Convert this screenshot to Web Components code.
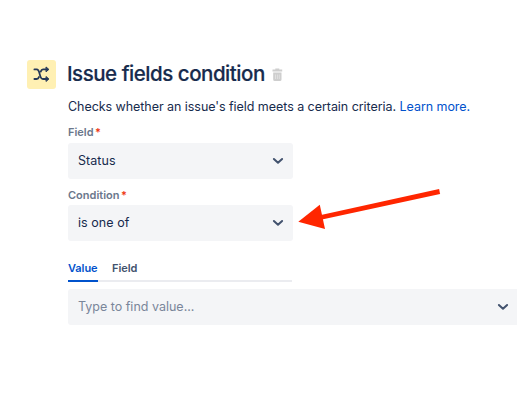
<!DOCTYPE html>
<html lang="en">
<head>
<meta charset="UTF-8">
<title>Issue fields condition</title>
<style>
    body {
        margin: 0;
        background: #fff;
        color: #172b4d;
        font-family: Inter, "Liberation Sans", sans-serif;
        overflow: hidden;
    }
</style>
</head>
<body>
<condition-panel>
    <span slot="title">Issue fields condition</span>
    <span slot="description">Checks whether an issue's field meets a certain criteria.</span>
    <form-field label="Field"><select-box>Status</select-box></form-field>
    <form-field label="Condition" compact><select-box>is one of</select-box></form-field>
    <tab-bar></tab-bar>
    <select-box wide>Type to find value...</select-box>
</condition-panel>
<pointer-arrow></pointer-arrow>

<script>
class ConditionPanel extends HTMLElement {
    constructor() {
        super();
        this.attachShadow({ mode: 'open' });
        this.shadowRoot.innerHTML = `
            <style>
                :host {
                    display: grid;
                    grid-template-columns: 29px 1fr;
                    column-gap: 12px;
                    padding: 60px 0 0 27px;
                    white-space: nowrap;
                }
                .icon {
                    width: 29px;
                    height: 29px;
                    border-radius: 3px;
                    background: #fff0b3;
                }
                svg { display: block; }
                header {
                    display: flex;
                    align-items: center;
                    height: 29px;
                }
                h1 {
                    margin: 0 0 2px -1px;
                    font-size: 20.5px;
                    font-weight: 500;
                    line-height: 27px;
                    letter-spacing: -0.47px;
                    -webkit-text-stroke: 0.2px;
                }
                .trash { margin-left: 7px; }
                .body { grid-column: 2; }
                p {
                    margin: 9px 0 9px;
                    font-size: 12.5px;
                    line-height: 18px;
                    letter-spacing: -0.05px;
                }
                a {
                    color: #0052cc;
                    text-decoration: none;
                }
            </style>
            <div class="icon">
                <svg width="29" height="29" viewBox="0 0 29 29" fill="none" stroke="#253858" stroke-width="1.8" stroke-linecap="round" stroke-linejoin="round">
                    <path d="M7.4 9.4H9.6C13.8 9.4 11.6 19 16 19H20"/>
                    <path d="M7.4 19H9.6C10.9 19 11.6 18.2 12 17M13.7 11.6C14.2 10.2 14.8 9.4 16 9.4H20"/>
                    <path fill="#253858" stroke-width="1" d="M19.3 7.2L21.9 9.4L19.3 11.6ZM19.3 16.8L21.9 19L19.3 21.2Z"/>
                </svg>
            </div>
            <header>
                <h1><slot name="title"></slot></h1>
                <svg class="trash" width="11" height="14" viewBox="0 0 11 14">
                    <path fill="#cecece" d="M3.3 0.6h4v1h2.9v1.9H0.5V1.6h2.8zM1.2 4.4h8.3v7.2q0 1.5-1.5 1.5H2.7q-1.5 0-1.5-1.5z"/>
                    <path stroke="#e4e4e4" stroke-width="0.8" d="M3.5 6.5v4.5M5.4 6.5v4.5M7.3 6.5v4.5"/>
                </svg>
            </header>
            <div class="body">
                <p><slot name="description"></slot> <a>Learn more.</a></p>
                <slot></slot>
            </div>
        `;
    }
}
customElements.define('condition-panel', ConditionPanel);

class FormField extends HTMLElement {
    constructor() {
        super();
        this.attachShadow({ mode: 'open' });
        this.shadowRoot.innerHTML = `
            <style>
                :host {
                    display: block;
                    margin-bottom: 8px;
                }
                label {
                    display: flex;
                    gap: 1.5px;
                    height: 18px;
                    font-size: 11px;
                    font-weight: 600;
                    line-height: 15px;
                    color: #6b778c;
                }
                :host([compact]) label {
                    height: 17px;
                    padding-top: 1px;
                }
                .required { color: #ee3a12; }
            </style>
            <label><span>${this.getAttribute('label')}</span><span class="required">*</span></label>
            <slot></slot>
        `;
    }
}
customElements.define('form-field', FormField);

class SelectBox extends HTMLElement {
    constructor() {
        super();
        this.attachShadow({ mode: 'open' });
        this.shadowRoot.innerHTML = `
            <style>
                :host {
                    display: flex;
                    align-items: center;
                    justify-content: space-between;
                    box-sizing: border-box;
                    width: 225px;
                    height: 36px;
                    padding: 0 9px 0 10px;
                    border-radius: 3px;
                    background: #f4f5f7;
                    font-size: 12.5px;
                    letter-spacing: 0.05px;
                }
                :host([wide]) {
                    width: 453px;
                    padding-right: 12px;
                    color: #7a869a;
                    letter-spacing: 0;
                }
                span { margin-bottom: 1px; }
            </style>
            <span><slot></slot></span>
            <svg width="12" height="8" viewBox="0 0 12 8" fill="none" stroke="#42526e" stroke-width="2" stroke-linecap="round" stroke-linejoin="round">
                <path d="M1.9 2L6 5.8L10.1 2"/>
            </svg>
        `;
    }
}
customElements.define('select-box', SelectBox);

class TabBar extends HTMLElement {
    constructor() {
        super();
        this.attachShadow({ mode: 'open' });
        this.shadowRoot.innerHTML = `
            <style>
                :host {
                    display: flex;
                    gap: 14.5px;
                    width: 224px;
                    height: 21px;
                    margin: 20px 0 7px;
                    box-shadow: inset 0 -2px #ebecf0;
                    font-size: 11px;
                    font-weight: 600;
                    line-height: 15px;
                    letter-spacing: -0.05px;
                    color: #42526e;
                }
                .active {
                    color: #0052cc;
                    box-shadow: inset 0 -2px #0052cc;
                }
            </style>
            <span class="active">Value</span>
            <span>Field</span>
        `;
    }
}
customElements.define('tab-bar', TabBar);

// Lies over the form and points at the condition select
class PointerArrow extends HTMLElement {
    constructor() {
        super();
        this.attachShadow({ mode: 'open' });
        this.shadowRoot.innerHTML = `
            <style>
                :host {
                    position: absolute;
                    left: 298px;
                    top: 188px;
                }
                svg { display: block; }
            </style>
            <svg width="144" height="44" viewBox="0 0 144 44" fill="#ff2600">
                <path d="M0.3 33.7L21.8 16.7L27 41Z"/>
                <path d="M23 26.9L141.1 1.1L142.1 5.9L24 31.6Z"/>
            </svg>
        `;
    }
}
customElements.define('pointer-arrow', PointerArrow);
</script>
</body>
</html>
